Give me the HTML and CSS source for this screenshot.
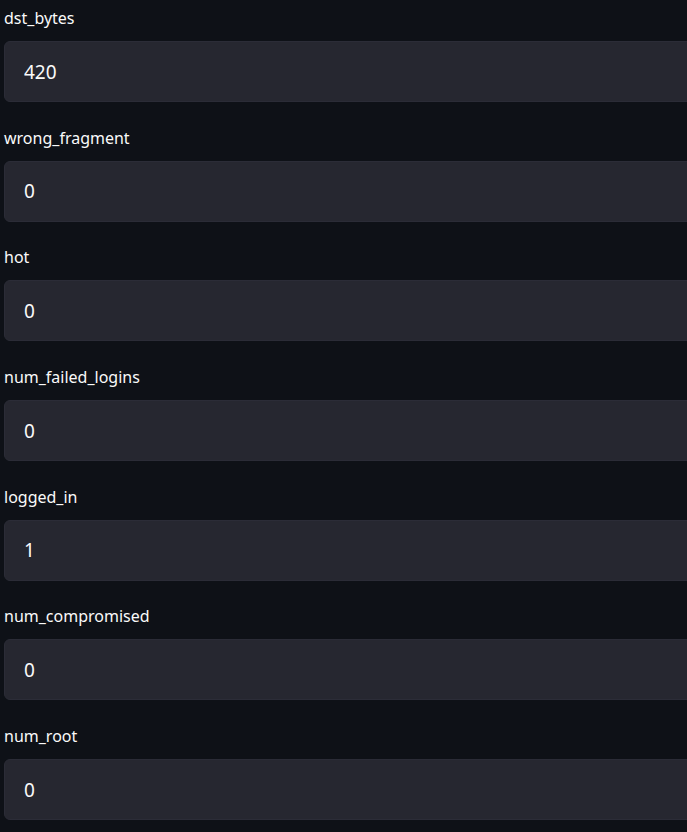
FILE: index.html
```html
<!DOCTYPE html>
<html lang="en">
<head>
<meta charset="utf-8">
<title>Inputs</title>
<link rel="stylesheet" href="styles.css">
</head>
<body>
<main class="form">
  <div class="field">
    <label class="field-label">dst_bytes</label>
    <div class="input-box"><input class="input" type="text" value="420"></div>
  </div>
  <div class="field">
    <label class="field-label">wrong_fragment</label>
    <div class="input-box"><input class="input" type="text" value="0"></div>
  </div>
  <div class="field">
    <label class="field-label">hot</label>
    <div class="input-box"><input class="input" type="text" value="0"></div>
  </div>
  <div class="field">
    <label class="field-label">num_failed_logins</label>
    <div class="input-box"><input class="input" type="text" value="0"></div>
  </div>
  <div class="field">
    <label class="field-label">logged_in</label>
    <div class="input-box"><input class="input" type="text" value="1"></div>
  </div>
  <div class="field">
    <label class="field-label">num_compromised</label>
    <div class="input-box"><input class="input" type="text" value="0"></div>
  </div>
  <div class="field">
    <label class="field-label">num_root</label>
    <div class="input-box"><input class="input" type="text" value="0"></div>
  </div>
</main>
</body>
</html>
```

FILE: styles.css
```css
html, body {
  margin: 0;
  padding: 0;
  background: #0e1117;
  overflow: hidden;
}
body {
  font-family: "Noto Sans", "Open Sans", sans-serif;
  color: #fafafa;
}
.form {
  display: flex;
  flex-direction: column;
  gap: 17.7px;
  padding-left: 4px;
}
.field {
  display: flex;
  flex-direction: column;
}
.field-label {
  display: block;
  font-size: 16px;
  line-height: 24px;
  padding-top: 6px;
  margin-bottom: 11px;
}
.input-box {
  width: 720px;
  height: 61px;
  box-sizing: border-box;
  background: #262730;
  border: 1px solid #2b2c37;
  border-radius: 6px;
  display: flex;
  align-items: center;
}
.input {
  border: 0;
  outline: 0;
  background: transparent;
  color: #fafafa;
  font-family: inherit;
  font-size: 19px;
  padding: 0 0 0 19px;
  margin: 0;
  width: 100%;
}
```
